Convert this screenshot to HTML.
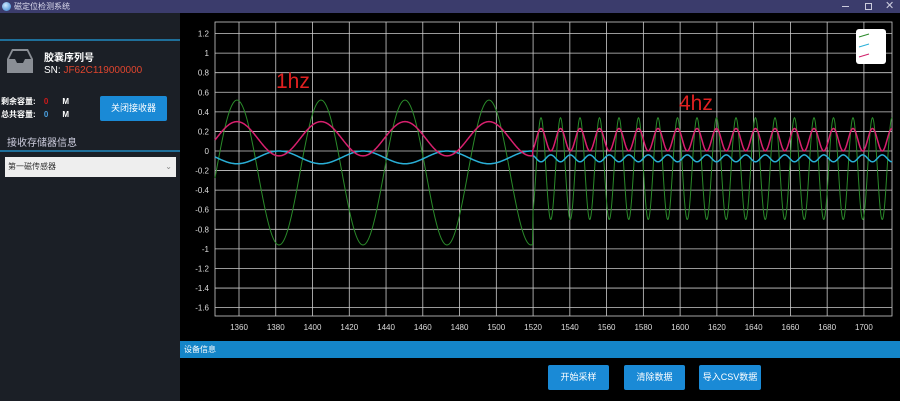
<!DOCTYPE html>
<html><head><meta charset="utf-8"><style>
body{margin:0;width:900px;height:401px;background:#000;overflow:hidden;font-family:"Liberation Sans","Noto Sans CJK SC",sans-serif;position:relative}
.abs{position:absolute}
.tb{left:0;top:0;width:900px;height:13px;background:#3b3c6c}
.lp{left:0;top:13px;width:180px;height:388px;background:#1b1f26}
.btn{background:#1a8ad6;color:#fff;font-size:9px;text-align:center;border-radius:2px}
</style></head><body>
<div class="abs tb"></div>
<div class="abs" style="left:2px;top:2px;width:9px;height:9px;border-radius:50%;background:radial-gradient(circle at 40% 35%,#cfe9ff,#2a7fd0)"></div>
<div class="abs" style="left:14px;top:0;font-size:8px;color:#dde;line-height:13px">磁定位检测系统</div>
<div class="abs" style="left:842px;top:6px;width:7px;height:1px;background:#ccd"></div>
<div class="abs" style="left:865px;top:3px;width:5px;height:5px;border:1px solid #ccd"></div>
<div class="abs" style="left:885px;top:-1px;font-size:11px;color:#ccd">✕</div>
<div class="abs lp"></div>
<div class="abs" style="left:0;top:39px;width:180px;height:2px;background:#1f6f9a"></div>
<svg class="abs" style="left:7px;top:48px" width="26" height="26" viewBox="0 0 26 26"><path d="M5 1h16l5 10v14H0V11z" fill="#8a8e95"/><path d="M6 3h14l4 8h-6l-2 4h-6l-2-4H2z" fill="#1b1f26"/></svg>
<div class="abs" style="left:44px;top:53px;font-size:10px;line-height:12px;color:#fff;font-weight:bold">胶囊序列号</div>
<div class="abs" style="left:44px;top:65px;font-size:10px;line-height:12px;color:#fff">SN: <span style="color:#e0452e">JF62C119000000</span></div>
<div class="abs" style="left:1px;top:96px;font-size:8px;color:#fff;font-weight:bold">剩余容量: <span style="color:#d01a1a;margin-left:6px">0</span><span style="margin-left:14px">M</span></div>
<div class="abs" style="left:1px;top:109px;font-size:8px;color:#fff;font-weight:bold">总共容量: <span style="color:#4aa0e0;margin-left:6px">0</span><span style="margin-left:14px">M</span></div>
<div class="abs btn" style="left:100px;top:96px;width:67px;height:25px;line-height:25px">关闭接收器</div>
<div class="abs" style="left:7px;top:134px;font-size:10px;color:#ccd">接收存储器信息</div>
<div class="abs" style="left:0;top:150px;width:180px;height:2px;background:#1f6f9a"></div>
<div class="abs" style="left:5px;top:157px;width:171px;height:20px;background:#eeeeee;font-size:8px;color:#333;line-height:20px;text-indent:3px">第一磁传感器<span style="position:absolute;right:4px;color:#888">⌄</span></div>
<svg id="ch" class="abs" style="left:180px;top:13px" width="720" height="327"></svg>
<div class="abs" style="left:856px;top:29px;width:30px;height:35px;background:#fff;border-radius:3px"></div>
<svg class="abs" style="left:857px;top:30px" width="28" height="33"><line x1="2" y1="7" x2="12" y2="4" stroke="#2a8a2a"/><line x1="2" y1="17" x2="12" y2="14" stroke="#2ab0d8"/><line x1="2" y1="27" x2="12" y2="24" stroke="#d0206a"/></svg>
<div class="abs" style="left:180px;top:341px;width:720px;height:17px;background:#1485c8;font-size:8px;color:#fff;line-height:17px;text-indent:4px">设备信息</div>
<div class="abs btn" style="left:548px;top:365px;width:61px;height:25px;line-height:25px">开始采样</div>
<div class="abs btn" style="left:624px;top:365px;width:61px;height:25px;line-height:25px">清除数据</div>
<div class="abs btn" style="left:699px;top:365px;width:62px;height:25px;line-height:25px">导入CSV数据</div>
<script>
var s=document.getElementById('ch'),h='',ox=180,oy=13;
function Y(v){return 151-v*97.9-oy}
function X(u){return 239+(u-1360)*1.838-ox}
var L=215-ox,R=892-ox,T=22-oy,B=316-oy;
for(var i=-8;i<=6;i++){var v=i*0.2,y=Y(v);h+='<line x1="'+L+'" x2="'+R+'" y1="'+y+'" y2="'+y+'" stroke="#ccc" stroke-width="0.8"/>';
h+='<text x="'+(L-6)+'" y="'+(y+3)+'" fill="#ddd" font-size="8" text-anchor="end">'+(Math.round(v*10)/10)+'</text>';}
for(var u=1360;u<=1720;u+=20){var x=X(u);if(x>R+1)continue;h+='<line y1="'+T+'" y2="'+B+'" x1="'+x+'" x2="'+x+'" stroke="#ccc" stroke-width="0.8"/><text x="'+x+'" y="'+(B+14)+'" fill="#ddd" font-size="8" text-anchor="middle">'+u+'</text>';}
h+='<rect x="'+L+'" y="'+T+'" width="'+(R-L)+'" height="'+(B-T)+'" fill="none" stroke="#ccc" stroke-width="0.8"/>';
var g='',p='',b='';
for(var x=215;x<=892;x+=0.5){var gv,pv,bv;
if(x<533){var t=(x-237)/84*2*Math.PI,c=Math.cos(t);gv=-0.22+0.74*c;pv=0.125+0.175*c;bv=-0.065-0.065*c;}
else{var t=(x-541)/19.5*2*Math.PI,c=Math.cos(t);gv=-0.18+0.52*c;pv=0.115+0.115*c;bv=-0.075-0.035*c;}
var px=(x-ox).toFixed(1);g+=px+','+Y(gv).toFixed(1)+' ';p+=px+','+Y(pv).toFixed(1)+' ';b+=px+','+Y(bv).toFixed(1)+' ';}
h+='<polyline points="'+g+'" fill="none" stroke="#2a8a2a" stroke-width="1"/>';
h+='<polyline points="'+b+'" fill="none" stroke="#2ab0d8" stroke-width="1.5"/>';
h+='<polyline points="'+p+'" fill="none" stroke="#d8206e" stroke-width="1.5"/>';
h+='<text x="'+(276-ox)+'" y="'+(88-oy)+'" fill="#e02020" font-size="21">1hz</text>';
h+='<text x="'+(679-ox)+'" y="'+(110-oy)+'" fill="#e02020" font-size="21">4hz</text>';
s.innerHTML=h;
</script>
</body></html>
